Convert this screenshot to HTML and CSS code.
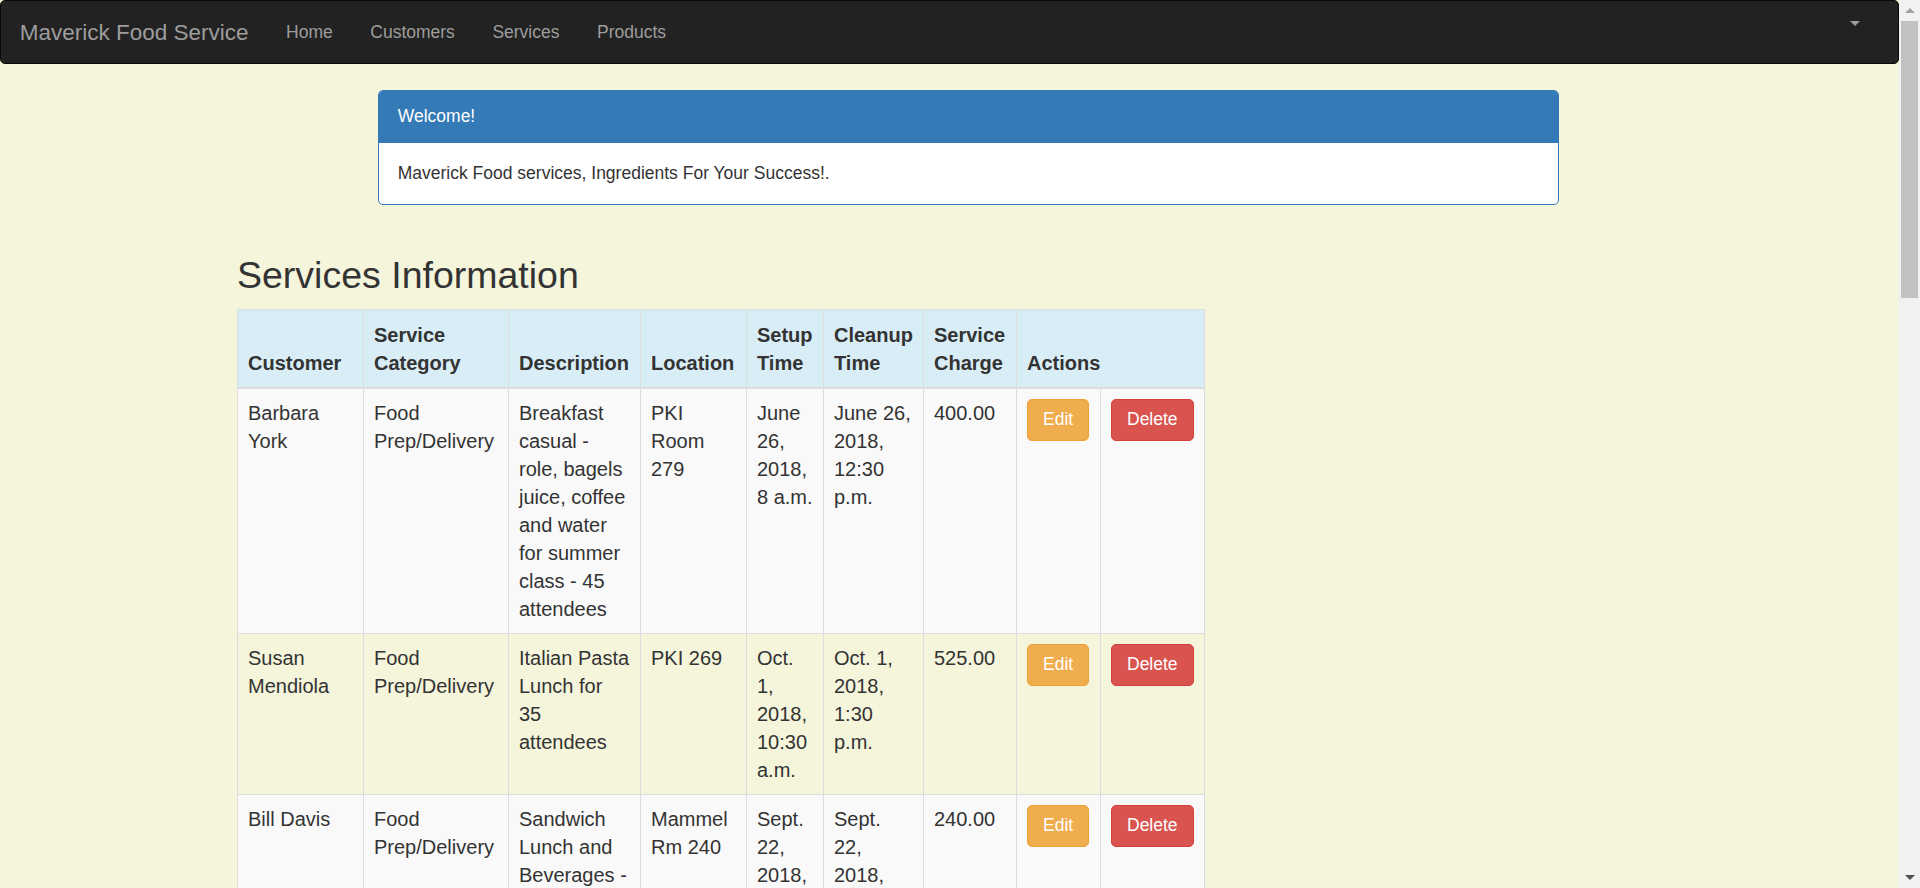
FILE: index.html
```html
<!DOCTYPE html>
<html lang="en">
<head>
<meta charset="utf-8">
<title>Services - Maverick Food Service</title>
<link rel="stylesheet" href="styles.css">
</head>
<body>
<div class="page">
  <nav class="navbar">
    <a class="brand" href="#">Maverick Food Service</a>
    <ul class="nav">
      <li><a href="#">Home</a></li>
      <li><a href="#">Customers</a></li>
      <li><a href="#">Services</a></li>
      <li><a href="#">Products</a></li>
    </ul>
    <div class="spacer"></div>
    <a class="dropdown-toggle" href="#"><span class="caret"></span></a>
  </nav>

  <div class="container">
    <div class="panel">
      <div class="panel-heading">Welcome!</div>
      <div class="panel-body">Maverick Food services, Ingredients For Your Success!.</div>
    </div>

    <h2 class="title">Services Information</h2>

    <table class="services">
      <colgroup>
        <col class="c-customer">
        <col class="c-category">
        <col class="c-desc">
        <col class="c-loc">
        <col class="c-setup">
        <col class="c-cleanup">
        <col class="c-charge">
        <col class="c-edit">
        <col class="c-delete">
      </colgroup>
      <thead>
        <tr>
          <th>Customer</th>
          <th>Service Category</th>
          <th>Description</th>
          <th>Location</th>
          <th>Setup Time</th>
          <th>Cleanup Time</th>
          <th>Service Charge</th>
          <th colspan="2">Actions</th>
        </tr>
      </thead>
      <tbody>
        <tr>
          <td>Barbara York</td>
          <td>Food Prep/Delivery</td>
          <td>Breakfast casual - role, bagels juice, coffee and water for summer class - 45 attendees</td>
          <td>PKI Room 279</td>
          <td>June 26, 2018, 8 a.m.</td>
          <td>June 26, 2018, 12:30 p.m.</td>
          <td>400.00</td>
          <td><a class="btn btn-warning" href="#">Edit</a></td>
          <td><a class="btn btn-danger" href="#">Delete</a></td>
        </tr>
        <tr>
          <td>Susan Mendiola</td>
          <td>Food Prep/Delivery</td>
          <td>Italian Pasta Lunch for 35 attendees</td>
          <td>PKI 269</td>
          <td>Oct. 1, 2018, 10:30 a.m.</td>
          <td>Oct. 1, 2018, 1:30 p.m.</td>
          <td>525.00</td>
          <td><a class="btn btn-warning" href="#">Edit</a></td>
          <td><a class="btn btn-danger" href="#">Delete</a></td>
        </tr>
        <tr>
          <td>Bill Davis</td>
          <td>Food Prep/Delivery</td>
          <td>Sandwich Lunch and Beverages - 20 attendees</td>
          <td>Mammel Rm 240</td>
          <td>Sept. 22, 2018, 11:30 a.m.</td>
          <td>Sept. 22, 2018, 1:30 p.m.</td>
          <td>240.00</td>
          <td><a class="btn btn-warning" href="#">Edit</a></td>
          <td><a class="btn btn-danger" href="#">Delete</a></td>
        </tr>
      </tbody>
    </table>
  </div>
</div>

<div class="scrollbar" aria-hidden="true">
  <div class="sb-button"><span class="sb-arrow-up"></span></div>
  <div class="sb-track"><div class="sb-thumb"></div></div>
  <div class="sb-button"><span class="sb-arrow-down"></span></div>
</div>
</body>
</html>
```

FILE: styles.css
```css
* {
  box-sizing: border-box;
}

html,
body {
  margin: 0;
  height: 100%;
}

body {
  display: flex;
  overflow: hidden;
  background: #f5f5dc;
  color: #333;
  font-family: "Liberation Sans", Arial, Helvetica, sans-serif;
  font-size: 17.5px;
  line-height: 25px;
}

a {
  text-decoration: none;
}

.page {
  flex: 1;
  min-width: 0;
  height: 100%;
  overflow: hidden;
}

/* ---------- navbar ---------- */
.navbar {
  display: flex;
  align-items: flex-start;
  height: 64px;
  background: #222;
  border: 1px solid #080808;
  border-radius: 5px;
}

.brand {
  display: block;
  padding: 18.75px;
  font-size: 22.5px;
  line-height: 25px;
  color: #9d9d9d;
}

.nav {
  display: flex;
  list-style: none;
  margin: 0;
  padding: 0;
}

.nav a {
  display: block;
  padding: 18.75px;
  color: #9d9d9d;
}

.spacer {
  flex: 1;
}

.dropdown-toggle {
  display: block;
  padding: 19px 38px 0 0;
  line-height: 0;
}

.caret {
  display: inline-block;
  width: 0;
  height: 0;
  border-top: 5px solid #9d9d9d;
  border-left: 5px solid transparent;
  border-right: 5px solid transparent;
}

/* ---------- container ---------- */
.container {
  width: 1462.5px;
  margin: 0 auto;
  padding: 0 18.75px;
}

.panel {
  width: 1181px;
  margin: 26px 0 0 141px;
  background: #fff;
  border: 1px solid #337ab7;
  border-radius: 5px;
  overflow: hidden;
}

.panel-heading {
  padding: 13px 18.75px;
  background: #337ab7;
  border-bottom: 1px solid #337ab7;
  color: #fff;
}

.panel-body {
  padding: 18px 18.75px;
}

.title {
  margin: 50px 0 12.5px;
  font-size: 37.5px;
  font-weight: 500;
  line-height: 1.1;
  color: #333;
}

/* ---------- table ---------- */
.services {
  width: 967px;
  table-layout: fixed;
  border-collapse: collapse;
  font-size: 20px;
  line-height: 28px;
}

.c-customer { width: 126px; }
.c-category { width: 145px; }
.c-desc { width: 132px; }
.c-loc { width: 106px; }
.c-setup { width: 77px; }
.c-cleanup { width: 100px; }
.c-charge { width: 93px; }
.c-edit { width: 84px; }
.c-delete { width: 104px; }

.services th,
.services td {
  padding: 10px;
  border: 1px solid #ddd;
  text-align: left;
  vertical-align: top;
}

.services thead th {
  padding-top: 11px;
  vertical-align: bottom;
  background: #d9edf7;
  border-bottom: 2px solid #ddd;
  font-weight: bold;
}

.services tbody tr:nth-child(odd) {
  background: #f9f9f9;
}

.btn {
  display: inline-block;
  vertical-align: top;
  padding: 7.5px 15px;
  font-size: 17.5px;
  line-height: 25px;
  color: #fff;
  border: 1px solid transparent;
  border-radius: 5px;
  white-space: nowrap;
}

.btn-warning {
  background: #f0ad4e;
  border-color: #eea236;
}

.btn-danger {
  background: #d9534f;
  border-color: #d43f3a;
}

/* ---------- scrollbar ---------- */
.scrollbar {
  width: 21px;
  height: 100%;
  display: flex;
  flex-direction: column;
  background: #f1f1f1;
}

.sb-button {
  height: 21px;
  display: flex;
  align-items: center;
  justify-content: center;
}

.sb-arrow-up {
  width: 0;
  height: 0;
  border-left: 5px solid transparent;
  border-right: 5px solid transparent;
  border-bottom: 5px solid #a3a3a3;
}

.sb-arrow-down {
  width: 0;
  height: 0;
  border-left: 5px solid transparent;
  border-right: 5px solid transparent;
  border-top: 5px solid #505050;
}

.sb-track {
  flex: 1;
  padding: 0 2px;
}

.sb-thumb {
  height: 277px;
  background: #c1c1c1;
}
```
